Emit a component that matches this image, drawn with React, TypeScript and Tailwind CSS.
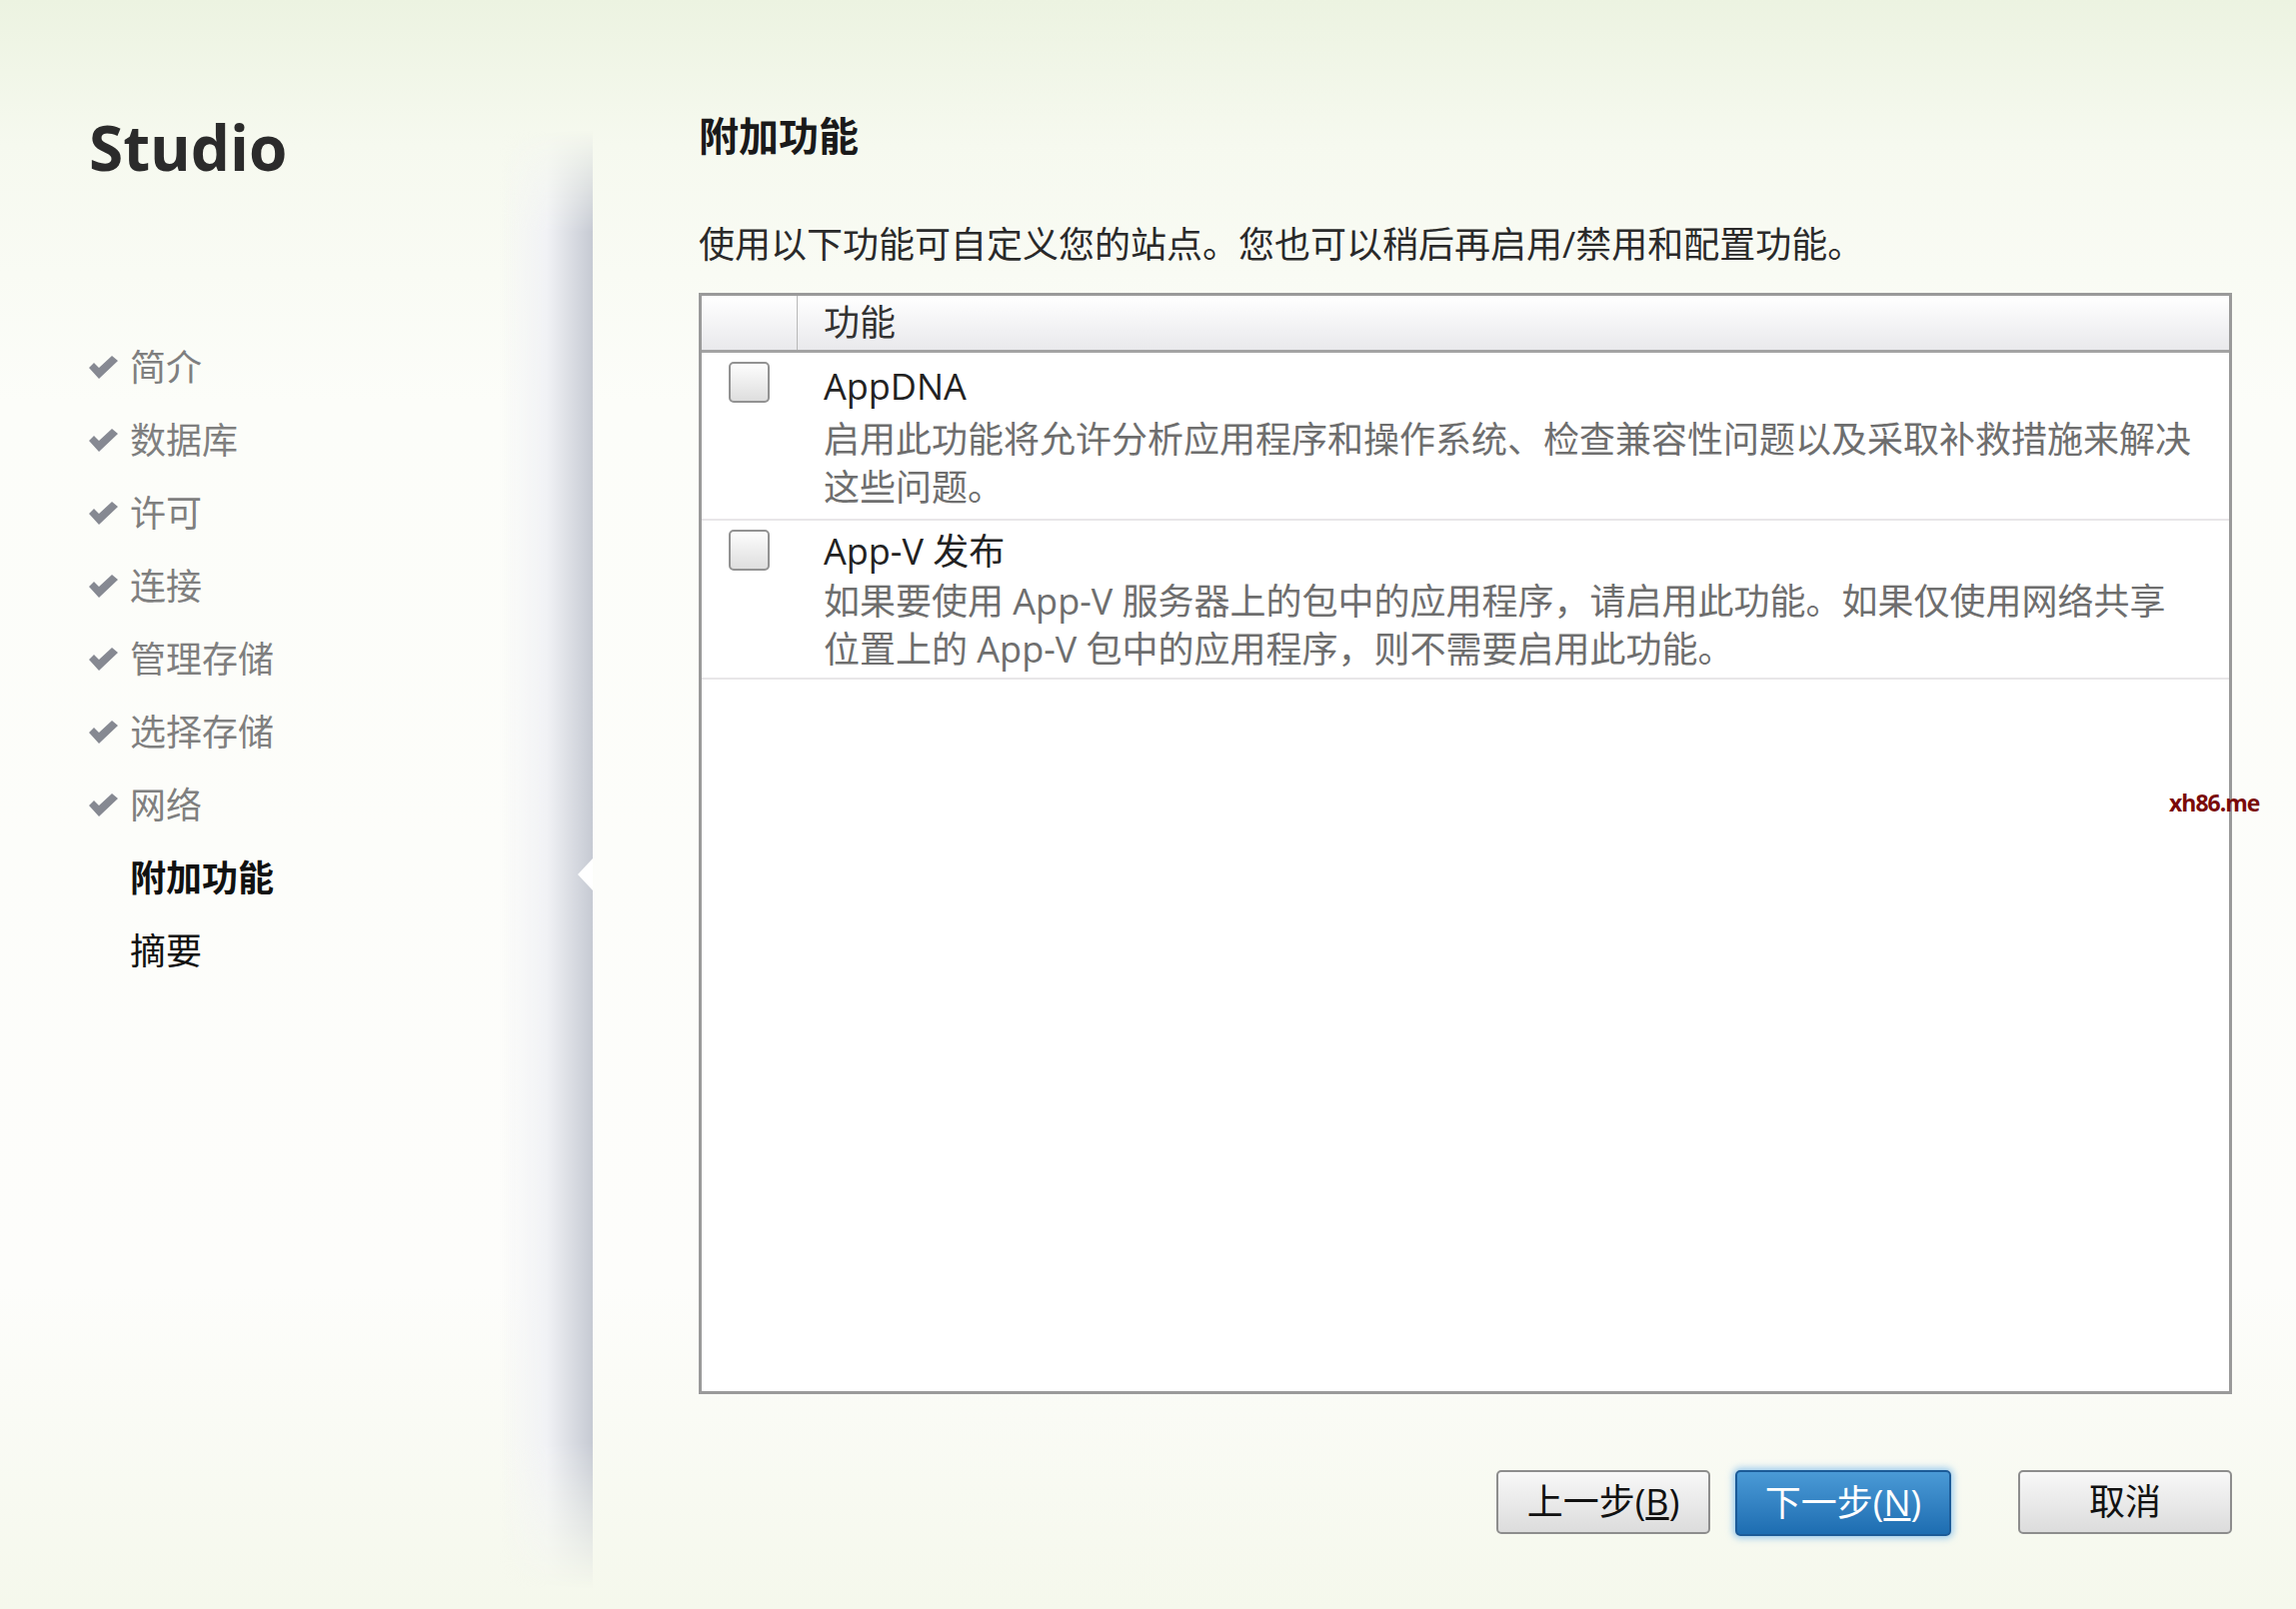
import React from "react";

const FONT = '"Open Sans","Noto Sans CJK SC",sans-serif';

const steps = [
  { label: "简介", done: true },
  { label: "数据库", done: true },
  { label: "许可", done: true },
  { label: "连接", done: true },
  { label: "管理存储", done: true },
  { label: "选择存储", done: true },
  { label: "网络", done: true },
  { label: "附加功能", current: true },
  { label: "摘要" },
];

const features = [
  {
    name: "AppDNA",
    pad: "pb-[7px] pl-[26px] pt-[9px]",
    gap: "mt-[4px]",
    lines: [
      "启用此功能将允许分析应用程序和操作系统、检查兼容性问题以及采取补救措施来解决",
      "这些问题。",
    ],
  },
  {
    name: "App-V 发布",
    pad: "pb-[4px] pl-[26px] pt-[6px]",
    gap: "mt-[1px]",
    lines: [
      "如果要使用 App-V 服务器上的包中的应用程序，请启用此功能。如果仅使用网络共享",
      "位置上的 App-V 包中的应用程序，则不需要启用此功能。",
    ],
  },
];

function CheckMark() {
  return (
    <svg width="29" height="24" viewBox="0 0 29 24" className="shrink-0">
      <path d="M0 12 L5 7 L10 12 L23 0 L29 5 L10 23 Z" fill="#868992" />
    </svg>
  );
}

function Step({ label, done, current }: { label: string; done?: boolean; current?: boolean }) {
  return (
    <div className="flex h-[73px] items-center gap-[12px]">
      {done ? <CheckMark /> : <div className="w-[29px] shrink-0" />}
      <span
        className={
          current
            ? "text-[36px] font-bold text-[#111]"
            : done
              ? "text-[36px] text-[#7f7f7f]"
              : "text-[36px] text-[#111]"
        }
      >
        {label}
      </span>
    </div>
  );
}

function Box() {
  return (
    <div className="h-[41px] w-[41px] rounded-[5px] border-2 border-[#929292] bg-gradient-to-b from-[#fdfdfd] to-[#dedede]" />
  );
}

function Btn({ children, primary }: { children: React.ReactNode; primary?: boolean }) {
  return (
    <button
      className={
        primary
          ? "flex h-[66px] w-[216px] items-center justify-center rounded-[5px] border-2 border-[#1c5b98] bg-gradient-to-b from-[#4a9ad6] to-[#1d6db1] text-[36px] text-white shadow-[0_0_7px_2px_rgba(70,160,235,0.55)]"
          : "flex h-[64px] w-[214px] items-center justify-center rounded-[5px] border-2 border-[#8d8d8d] bg-gradient-to-b from-[#f8f8f8] to-[#dcdcdc] text-[36px] text-[#111]"
      }
    >
      {children}
    </button>
  );
}

export default function App() {
  return (
    <div
      className="relative flex h-[1610px] w-[2297px] overflow-hidden bg-[linear-gradient(180deg,#ecf3e1_0%,#f6f9ef_9%,#fcfdf9_25%,#fdfdfb_80%,#f5f8ec_100%)]"
      style={{ fontFamily: FONT }}
    >
      {/* left step list */}
      <div className="flex w-[593px] shrink-0">
        <div className="flex-1 pl-[89px] pt-[116px]">
          <div className="text-[62px] font-bold leading-none text-[#2b2b2b]">Studio</div>
          <div className="mt-[153px] flex flex-col">
            {steps.map((s) => (
              <Step key={s.label} {...s} />
            ))}
          </div>
        </div>
        <div className="relative mt-[130px] mb-[20px] w-[93px]">
          <div className="absolute inset-0 bg-gradient-to-r from-transparent via-[#f1f2f5] to-[#c6cad3] [mask-image:linear-gradient(180deg,transparent_0%,black_7%,black_90%,transparent_100%)]" />
          <div className="absolute right-0 top-[729px] h-0 w-0 border-y-[16px] border-r-[15px] border-y-transparent border-r-white" />
        </div>
      </div>

      {/* main panel */}
      <div className="flex flex-1 flex-col pl-[106px] pt-[112px]">
        <div className="text-[40px] font-bold leading-[48px] text-[#1a1a1a]">附加功能</div>
        <div className="mt-[61px] text-[36px] leading-[48px] text-[#2a2a2a]">
          使用以下功能可自定义您的站点。您也可以稍后再启用/禁用和配置功能。
        </div>

        <div className="mt-[24px] flex h-[1102px] w-[1534px] flex-col border-[3px] border-[#9a9a9a] bg-white">
          <div className="flex h-[57px] border-b-[3px] border-[#a3a3a3] bg-gradient-to-b from-white to-[#e9e9ec]">
            <div className="w-[96px] border-r border-[#b8b8b8]" />
            <div className="flex items-center pl-[26px] text-[36px] text-[#333]">功能</div>
          </div>
          {features.map((f) => (
            <div key={f.name} className="flex border-b-2 border-[#e8e6e8]">
              <div className="w-[96px] shrink-0 pl-[27px] pt-[9px]">
                <Box />
              </div>
              <div className={f.pad}>
                <div className="text-[36px] leading-[50px] text-[#222]">{f.name}</div>
                <div className={`${f.gap} whitespace-nowrap text-[36px] leading-[48px] text-[#6e6e6e]`}>
                  {f.lines.map((l) => (
                    <div key={l}>{l}</div>
                  ))}
                </div>
              </div>
            </div>
          ))}
        </div>

        <div className="mt-[76px] flex w-[1534px] justify-end">
          <Btn>
            上一步(<span className="underline">B</span>)
          </Btn>
          <div className="ml-[25px] mr-[67px]">
            <Btn primary>
              下一步(<span className="underline">N</span>)
            </Btn>
          </div>
          <Btn>取消</Btn>
        </div>
      </div>

      <div className="absolute left-[2170px] top-[786px] text-[23px] font-bold tracking-[-1px] text-[#7a0a0a]">
        xh86.me
      </div>
    </div>
  );
}
